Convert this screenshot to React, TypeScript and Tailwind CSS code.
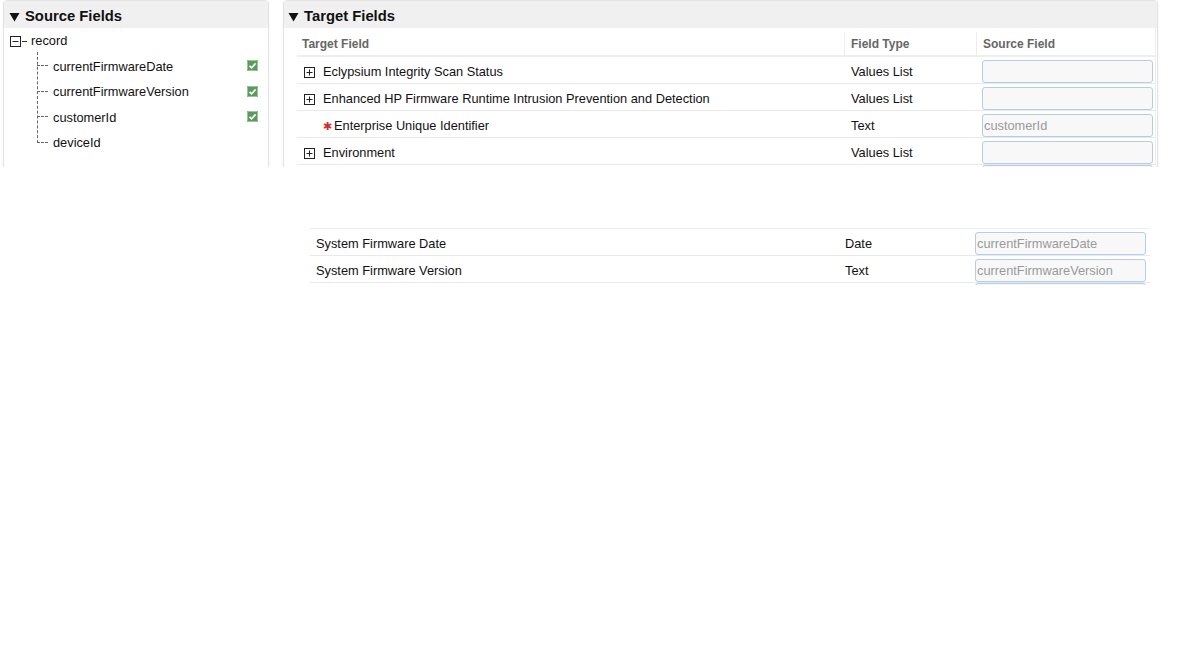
import React from "react";

type Row = { name: string; type: string; source: string; kind: "plus" | "req" | "none" };

const mainRows: Row[] = [
  { name: "Eclypsium Integrity Scan Status", type: "Values List", source: "", kind: "plus" },
  { name: "Enhanced HP Firmware Runtime Intrusion Prevention and Detection", type: "Values List", source: "", kind: "plus" },
  { name: "Enterprise Unique Identifier", type: "Text", source: "customerId", kind: "req" },
  { name: "Environment", type: "Values List", source: "", kind: "plus" },
];

const lowerRows: Row[] = [
  { name: "System Firmware Date", type: "Date", source: "currentFirmwareDate", kind: "none" },
  { name: "System Firmware Version", type: "Text", source: "currentFirmwareVersion", kind: "none" },
];

const sourceFields = [
  { name: "currentFirmwareDate", mapped: true },
  { name: "currentFirmwareVersion", mapped: true },
  { name: "customerId", mapped: true },
  { name: "deviceId", mapped: false },
];

function Caret() {
  return (
    <svg width="11" height="10" viewBox="0 0 11 10" className="shrink-0">
      <polygon points="0.5,1 10.5,1 5.5,9.5" fill="#111" />
    </svg>
  );
}

function BoxIcon({ plus }: { plus: boolean }) {
  return (
    <svg width="11" height="11" viewBox="0 0 11 11" className="shrink-0">
      <rect x="0.5" y="0.5" width="10" height="10" fill="#fff" stroke="#222" />
      <line x1="2.5" y1="5.5" x2="8.5" y2="5.5" stroke="#222" />
      {plus && <line x1="5.5" y1="2.5" x2="5.5" y2="8.5" stroke="#222" />}
    </svg>
  );
}

function CheckMark() {
  return (
    <svg width="11" height="11" viewBox="0 0 11 11" className="shrink-0">
      <rect x="0" y="0" width="11" height="11" rx="1" fill="#5a9b5a" />
      <rect x="0.5" y="0.5" width="10" height="10" rx="1" fill="none" stroke="#9cc79c" />
      <path d="M2.5 5.8 L4.6 7.8 L8.6 3.4" fill="none" stroke="#fff" strokeWidth="1.6" />
    </svg>
  );
}

function SourceInput({ value }: { value: string }) {
  return (
    <div className="h-[23px] w-[171px] rounded-[3px] border border-[#b5cde6] bg-[#f8f8f8] pl-[1px] text-[12.8px] leading-[21px] text-[#9a9a9a]">
      {value}
    </div>
  );
}

function TableRow({ row, nameW, typeW, nameInset }: { row: Row; nameW: number; typeW: number; nameInset: string }) {
  return (
    <div className="flex h-[27px] border-b border-[#e9e9e9] text-[12.8px] text-[#111]">
      <div className={`flex items-center pt-[4px] ${nameInset}`} style={{ width: nameW }}>
        {row.kind === "plus" && (
          <span className="mr-[8px] flex">
            <BoxIcon plus />
          </span>
        )}
        {row.kind === "req" && <span className="ml-[19px] mr-[2px] text-[11px] leading-none text-[#d9262b]">✱</span>}
        <span>{row.name}</span>
      </div>
      <div className="flex items-center pl-[6px] pt-[4px]" style={{ width: typeW }}>
        {row.type}
      </div>
      <div className="flex flex-1 items-start pl-[5px] pt-[3px]">
        <SourceInput value={row.source} />
      </div>
    </div>
  );
}

export default function App() {
  return (
    <div className="h-[648px] w-[1178px] overflow-hidden bg-white font-['Liberation_Sans',Arial,sans-serif]">
      <div className="flex h-[167px] overflow-hidden">
        {/* Source Fields panel */}
        <div className="ml-[3px] h-[190px] w-[266px] rounded-t-[4px] border border-[#e4e4e4] shadow-[0_0_2px_rgba(0,0,0,0.08)]">
          <div className="flex h-[27px] items-center gap-[5px] rounded-t-[4px] bg-[#f0f0f0] pl-[5px] pt-[4px] text-[14.8px] font-bold text-[#111]">
            <Caret />
            <span>Source Fields</span>
          </div>
          <div className="pl-[6px] pt-[2px] text-[12.8px] text-[#111]">
            <div className="flex h-[22px] items-center">
              <BoxIcon plus={false} />
              <span className="ml-[1px] w-[5px] border-t border-[#333]" />
              <span className="ml-[4px]">record</span>
            </div>
            <div className="relative ml-[27px] mt-[1px]">
              <div className="absolute left-0 top-[-1px] h-[91px] border-l border-dashed border-[#666]" />
              {sourceFields.map((f) => (
                <div key={f.name} className="flex h-[25.5px] items-center">
                  <span className="w-[11px] border-t border-dashed border-[#666]" />
                  <span className="ml-[5px] flex-1 pt-[1px]">{f.name}</span>
                  {f.mapped && (
                    <span className="mr-[10px] flex">
                      <CheckMark />
                    </span>
                  )}
                </div>
              ))}
            </div>
          </div>
        </div>

        {/* Target Fields panel */}
        <div className="ml-[14px] h-[190px] w-[875px] rounded-t-[4px] border border-[#e4e4e4] shadow-[0_0_2px_rgba(0,0,0,0.08)]">
          <div className="flex h-[27px] items-center gap-[5px] rounded-t-[4px] bg-[#f0f0f0] pl-[4px] pt-[4px] text-[14.8px] font-bold text-[#111]">
            <Caret />
            <span>Target Fields</span>
          </div>
          <div className="ml-[13px] mr-[1px] border-r border-[#eeeeee]">
            <div className="flex h-[29px] border-b-2 border-[#eeeeee] pt-[4px] text-[12px] font-bold text-[#666]">
              <div className="flex w-[548px] items-center border-r border-[#eeeeee] pl-[5px]">Target Field</div>
              <div className="flex w-[132px] items-center border-r border-[#eeeeee] pl-[6px]">Field Type</div>
              <div className="flex flex-1 items-center pl-[6px]">Source Field</div>
            </div>
            {mainRows.map((r) => (
              <TableRow key={r.name} row={r} nameW={548} typeW={132} nameInset="pl-[7px]" />
            ))}
            <div className="flex h-[27px]">
              <div className="w-[685px]" />
              <SourceInput value="" />
            </div>
          </div>
        </div>
      </div>

      {/* detached rows further down the list */}
      <div className="ml-[310px] mt-[61px] h-[57px] w-[840px] overflow-hidden border-t border-[#eeeeee]">
        {lowerRows.map((r) => (
          <TableRow key={r.name} row={r} nameW={529} typeW={131} nameInset="pl-[6px]" />
        ))}
        <div className="flex h-[27px]">
          <div className="w-[665px]" />
          <SourceInput value="" />
        </div>
      </div>
    </div>
  );
}
